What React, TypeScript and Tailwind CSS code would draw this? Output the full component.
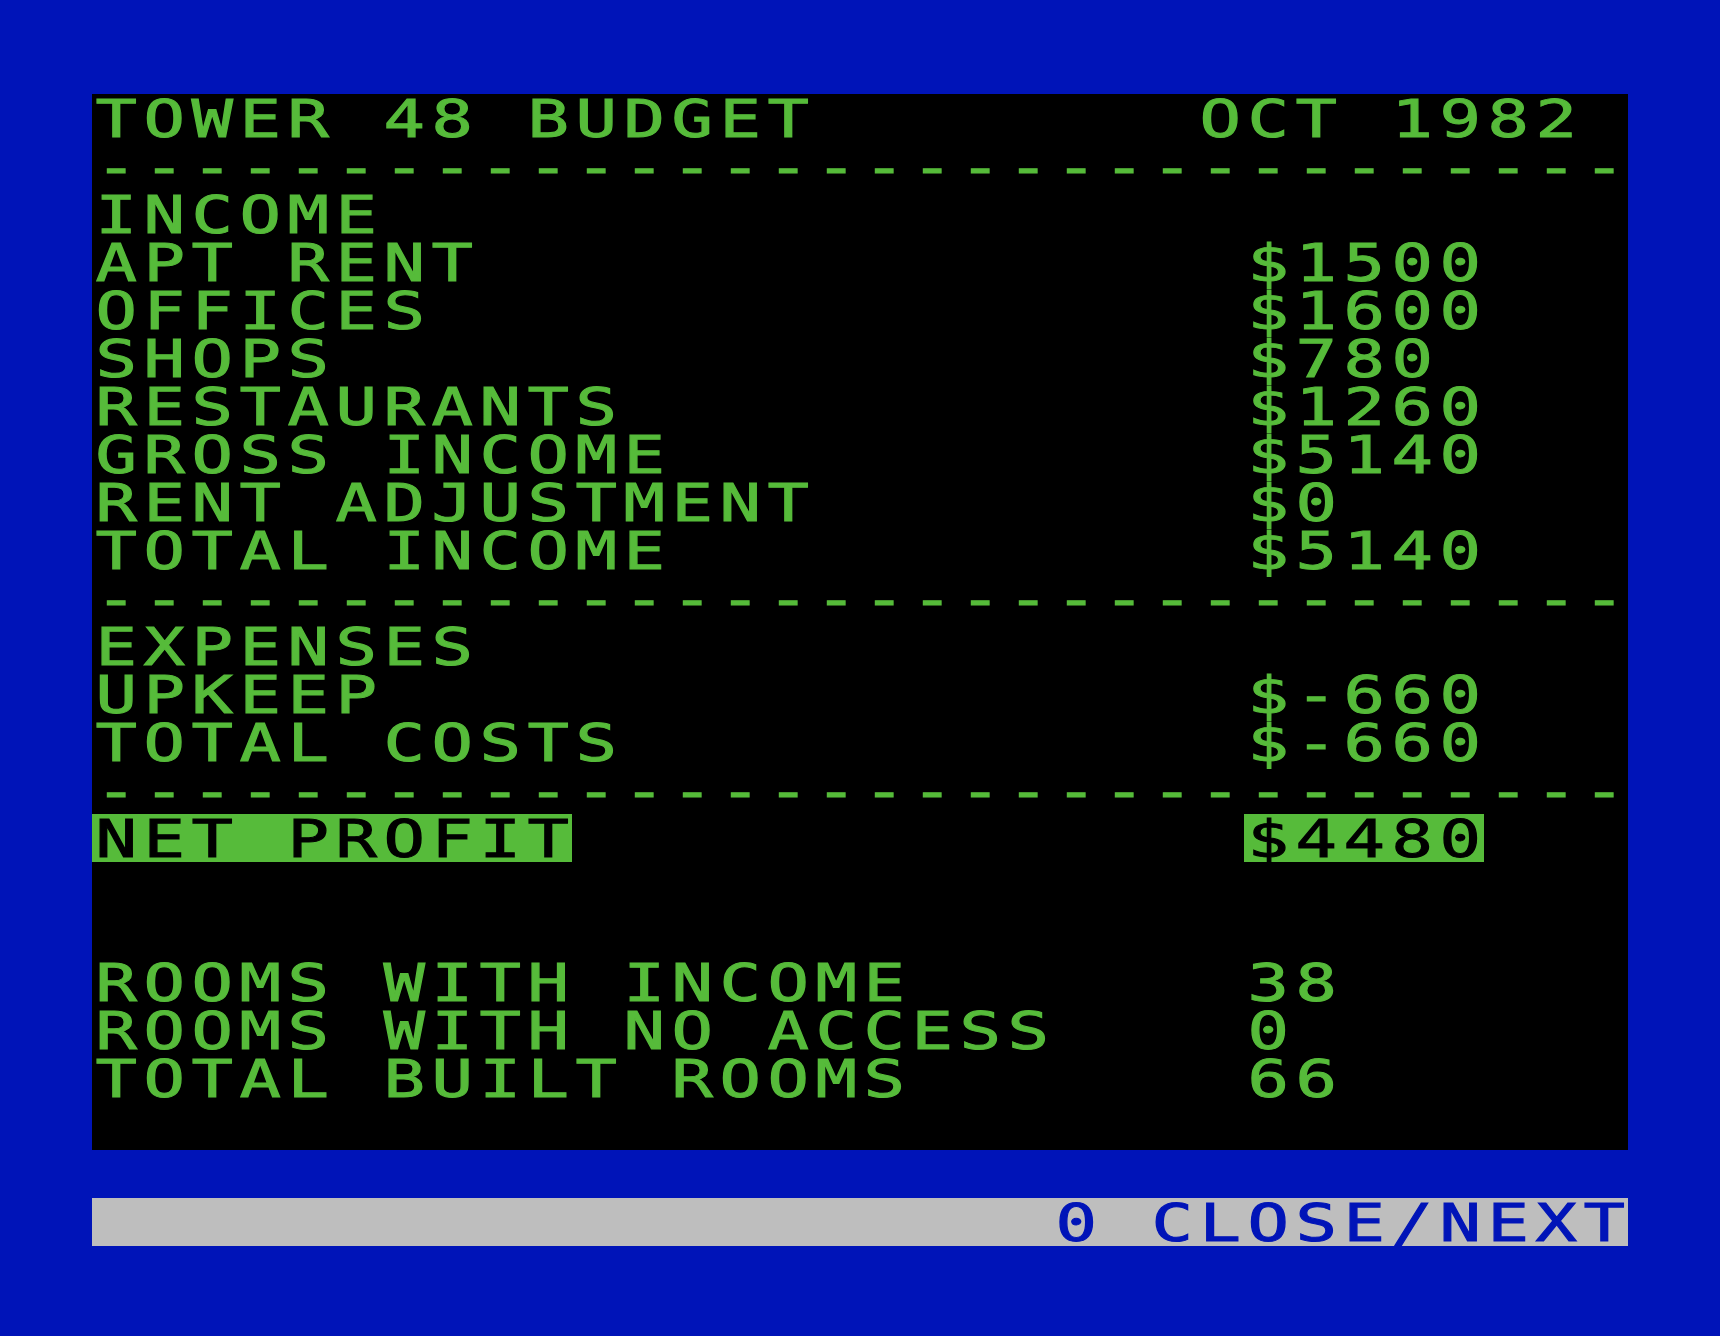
import React from "react";
import clsx from "clsx";

// 32 x 24 character screen, each cell 48px square
const COLS = 32;

interface Row {
  text: string;
  inverse?: [number, number][];
  kind?: "screen" | "blank" | "status";
}

const line = (left: string, right = "", col = 24) =>
  (right ? left.padEnd(col) + right : left).padEnd(COLS);

const dashes = "-".repeat(COLS);

const rows: Row[] = [
  { text: line("TOWER 48 BUDGET", "OCT 1982", 23) },
  { text: dashes },
  { text: line("INCOME") },
  { text: line("APT RENT", "$1500") },
  { text: line("OFFICES", "$1600") },
  { text: line("SHOPS", "$780") },
  { text: line("RESTAURANTS", "$1260") },
  { text: line("GROSS INCOME", "$5140") },
  { text: line("RENT ADJUSTMENT", "$0") },
  { text: line("TOTAL INCOME", "$5140") },
  { text: dashes },
  { text: line("EXPENSES") },
  { text: line("UPKEEP", "$-660") },
  { text: line("TOTAL COSTS", "$-660") },
  { text: dashes },
  {
    text: line("NET PROFIT", "$4480"),
    inverse: [
      [0, 10],
      [24, 29],
    ],
  },
  { text: line("") },
  { text: line("") },
  { text: line("ROOMS WITH INCOME", "38") },
  { text: line("ROOMS WITH NO ACCESS", "0") },
  { text: line("TOTAL BUILT ROOMS", "66") },
  { text: line("") },
  { text: line(""), kind: "blank" },
  { text: line("", "0 CLOSE/NEXT", 20), kind: "status" },
];

const Cell: React.FC<{ ch: string; inverse?: boolean; status?: boolean }> = ({
  ch,
  inverse,
  status,
}) => (
  <span
    className={clsx(
      "flex h-[48px] w-[48px] items-center justify-center",
      inverse && "bg-[#56bb3a] text-black",
      status && "text-[#0014b8]"
    )}
  >
    <span className="block h-[38px] translate-y-[2px] scale-x-[1.68] scale-y-[1.24] leading-[38px] [-webkit-text-stroke:0.8px_currentColor]">
      {ch === " " ? "\u00a0" : ch}
    </span>
  </span>
);

const ScreenRow: React.FC<{ row: Row }> = ({ row }) => {
  const isInv = (i: number) =>
    (row.inverse || []).some(([a, b]) => i >= a && i < b);
  return (
    <div
      className={clsx(
        "flex",
        row.kind === "blank" && "bg-[#0014b8]",
        row.kind === "status" && "bg-[#bebebe]"
      )}
    >
      {row.text.split("").map((ch, i) => (
        <Cell key={i} ch={ch} inverse={isInv(i)} status={row.kind === "status"} />
      ))}
    </div>
  );
};

const App: React.FC = () => {
  return (
    <div className="h-[1336px] w-[1720px] bg-[#0014b8] pl-[92px] pt-[94px]">
      <div className="w-[1536px] bg-black font-['DejaVu_Sans_Mono',monospace] text-[41px] text-[#56bb3a]">
        {rows.map((row, i) => (
          <ScreenRow key={i} row={row} />
        ))}
      </div>
    </div>
  );
};

export default App;
